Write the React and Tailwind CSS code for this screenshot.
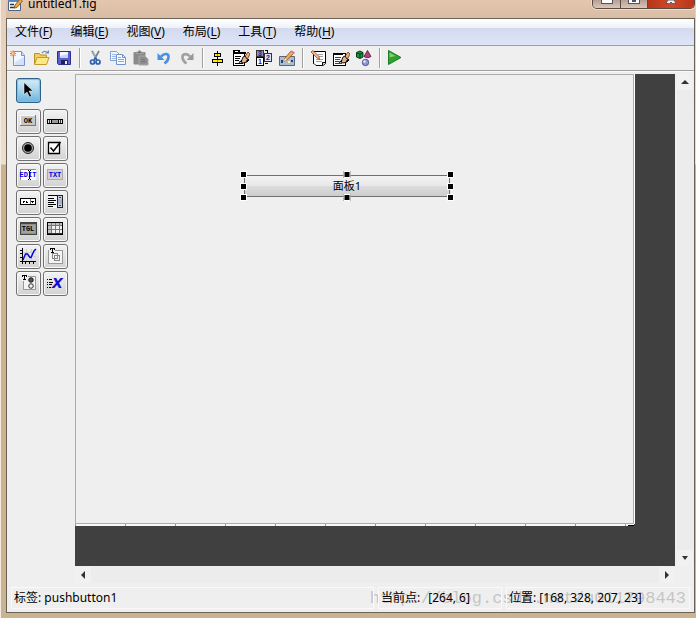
import clsx from 'clsx';

const menus = [
  { label: '文件', key: 'F' },
  { label: '编辑', key: 'E' },
  { label: '视图', key: 'V' },
  { label: '布局', key: 'L' },
  { label: '工具', key: 'T' },
  { label: '帮助', key: 'H' },
];

// Hand holding a pencil, shared by the two editor icons
const hand = (
  <>
    <path d="M8 13l3-4 4-6 2 2-3 6z" fill="#f6b26b" stroke="#3a2210" strokeWidth=".7" />
    <path d="M10 8l2-1 2 3 2 1-2 2-4 1-2-1z" fill="#e8b088" stroke="#000" strokeWidth=".9" />
    <path d="M6 13.500l3-2M13 12.500l3-2" stroke="#000" strokeWidth="1.200" />
  </>
);

// Toolbar icons, drawn on a 17x18 grid
const toolIcons = {
  new: (
    <>
      <path d="M3.500 2.500h8l3 4v10h-11z" fill="#f4f8ff" stroke="#7b8fd0" />
      <path d="M5 13l9-5v8H5z" fill="#d3e1fa" />
      <path d="M11.500 2.500v4h3" fill="#cfdcf6" stroke="#7b8fd0" />
      <path d="M.5 2l5 5M5.500 2l-5 5M3 1.500v6M0 4.500h6" stroke="#e4602c" strokeWidth=".9" />
      <circle cx="3" cy="4.500" r="1.300" fill="#ffd27a" />
    </>
  ),
  open: (
    <>
      <path d="M1.500 15V4.500h5l1 1.500h6V9" fill="#f3cf5b" stroke="#b8902c" />
      <path d="M1.500 15.500l2.500-7h12l-2.500 7z" fill="#fde886" stroke="#c49a2c" />
      <path d="M9 4c2-2.500 4-2 5 0" fill="none" stroke="#6f8fb8" strokeWidth="1.300" />
      <path d="M12 4.500h4V1z" fill="#6f8fb8" />
    </>
  ),
  save: (
    <>
      <path d="M1.500 2.500h13v13h-12l-1-1z" fill="#5a5fd0" stroke="#2d2f86" />
      <path d="M4 3h8v6H4z" fill="#f4f7ff" />
      <path d="M4 7l8-2v4H4z" fill="#c6d3f2" />
      <path d="M5 11h7v4H5z" fill="#1f2152" />
      <path d="M9 12h2v3H9z" fill="#e9ecff" />
    </>
  ),
  cut: (
    <>
      <path d="M5 2l4.500 8M12 2l-4.500 8" stroke="#6f8295" strokeWidth="1.700" />
      <path d="M5.500 3l3.500 6" stroke="#c3ced8" strokeWidth=".7" />
      <circle cx="5.500" cy="13" r="2" fill="none" stroke="#2b5fb4" strokeWidth="1.700" />
      <circle cx="11" cy="13" r="2" fill="none" stroke="#2b5fb4" strokeWidth="1.700" />
      <path d="M7 11l1.500-2L10 11" fill="none" stroke="#2b5fb4" strokeWidth="1.500" />
    </>
  ),
  copy: (
    <>
      <path d="M.5 2.500h6l3 3v6h-9z" fill="#eef5ff" stroke="#7ea1d6" />
      <path d="M2 5.500h4M2 7.500h5M2 9.500h4" stroke="#9bb9e4" />
      <path d="M6.500 5.500h6l3 3v7h-9z" fill="#f4f9ff" stroke="#6f95d0" />
      <path d="M12.500 5.500v3h3" fill="none" stroke="#6f95d0" />
      <path d="M8 8.500h3M8 10.500h6M8 12.500h6" stroke="#88abe0" />
    </>
  ),
  paste: (
    <>
      <rect x=".5" y="3" width="12" height="12.500" rx="1" fill="#8a8a8a" />
      <path d="M3 4.500V3h2c0-2 3-2 3 0h2v1.500z" fill="#777" stroke="#b5b5b5" strokeWidth=".6" />
      <path d="M6 7h6l3 3v6H6z" fill="#8f8f8f" stroke="#a9a9a9" />
      <path d="M8 10.500h4M8 12.500h5" stroke="#777" />
    </>
  ),
  undo: (
    <>
      <path d="M5 7.500c4-4 8-3 7.500 1-.3 3-2 4.500-4 6" fill="none" stroke="#4a8fe2" strokeWidth="2.600" />
      <path d="M1.500 4v7h7z" fill="#4a8fe2" />
    </>
  ),
  redo: (
    <>
      <path d="M11 7.500C7.500 3.500 3 5 3.500 8.500c.3 3 1.700 4.500 4 6" fill="none" stroke="#a0a0a0" strokeWidth="2.600" />
      <path d="M14.500 4v7h-7z" fill="#989898" />
    </>
  ),
  align: (
    <g shapeRendering="crispEdges">
      <path d="M7 2h1v15H7z" />
      <path d="M4.500 4.500h6v3h-6zM2.500 10.500h10v3h-10z" fill="#ffee00" stroke="#000" />
      <path d="M7 5h1v2H7zM7 11h1v2H7z" fill="#b09a00" />
    </g>
  ),
  menuEditor: (
    <>
      <g shapeRendering="crispEdges">
        <path d="M0 1h7v3H0zM0 3h13v2H0z" />
        <path d="M2 2h3v1H2z" fill="#fff" />
        <path d="M.5 4.500h11v12h-11z" fill="#fff" stroke="#000" />
        <path d="M2 7h6v1H2zM2 9h5v1H2zM2 11h4v1H2zM2 14h8v1H2z" />
      </g>
      {hand}
    </>
  ),
  tabOrder: (
    <>
      <g shapeRendering="crispEdges">
        <path d="M.5 1.500h7v6h-7z" fill="#8f90b4" stroke="#333" />
        <path d="M8.500 4.500h7v8h-7z" fill="#e0e0f4" stroke="#333" />
        <path d="M.5 8.500h7v8h-7z" fill="#fff" stroke="#000" />
        <path d="M9 1h3v1H9zM11 2h1v2h-1zM9 14h3v1H9z" />
      </g>
      <g className="font-['Liberation_Sans'] text-[7px] font-bold" fill="#15159a" textAnchor="middle">
        <text x="4" y="7">3</text>
        <text x="12" y="11">2</text>
        <text x="4" y="15">1</text>
      </g>
    </>
  ),
  toolbarEditor: (
    <>
      <path d="M.5 7.500h15v9H.5z" fill="#aebdcc" stroke="#54677d" />
      <path d="M2 11h2v3H2zM12 11h2v2h-2z" fill="#1f3f86" />
      <path d="M9 12h2v2H9z" fill="#fff2a0" />
      <path d="M5 12l1-3 6-7 3 2-7 7z" fill="#f0a860" stroke="#7b4316" strokeWidth=".7" />
      <path d="M12 3l1-1.500 3 2L15 5z" fill="#d6837b" />
      <path d="M5 12l1-3 2 2z" fill="#fff5da" />
    </>
  ),
  mfile: (
    <>
      <path d="M3.500 2.500h12v12l-2.500 2H6l-2-2h-.5z" fill="#fff" stroke="#000" />
      <path d="M8 5.500h5M9 7.500h4M6 10.500h7M6 12.500h6" stroke="#888" strokeWidth=".8" />
      <path d="M12.500 16.500v-3h3" fill="#d9d9d9" stroke="#000" />
      <path d="M1 3l2-1.500 6 6 .5 3L7 9z" fill="#f3b98a" stroke="#7a3a18" strokeWidth=".7" />
    </>
  ),
  property: (
    <>
      <g shapeRendering="crispEdges">
        <path d="M.5 4.500h12v12H.5z" fill="#fff" stroke="#000" />
        <path d="M0 4h10v2H0z" />
        <path d="M2 8h6v1H2zM2 10h5v1H2zM2 12h4v1H2zM2 14h7v1H2z" fill="#1d36d8" />
      </g>
      {hand}
    </>
  ),
  browser: (
    <>
      <path d="M.5 3.500L4 2l3 1.500V8L4 9.500.5 8z" fill="#21924a" stroke="#053b16" />
      <path d="M1 4l3 1 3-1M4 5v4" fill="none" stroke="#053b16" />
      <path d="M11.500 1.500l3.500 6c-2 1.500-5 1.500-7 0z" fill="#b5427d" stroke="#4a1030" strokeWidth=".8" />
      <circle cx="9.500" cy="13.500" r="3.200" fill="#8f98dc" stroke="#3b4080" strokeWidth=".8" />
      <circle cx="8.500" cy="12.500" r="1.200" fill="#e6eaff" />
    </>
  ),
  run: (
    <>
      <path d="M1.500 1.500v14l12.500-7z" fill="#2fa32f" stroke="#1d7d21" />
      <path d="M2.500 3.500v5l6-1.500z" fill="#7fd070" />
    </>
  ),
};

const toolGroups = [
  ['new', 'open', 'save'],
  ['cut', 'copy', 'paste', 'undo', 'redo'],
  ['align', 'menuEditor', 'tabOrder', 'toolbarEditor'],
  ['mfile', 'property', 'browser'],
  ['run'],
];

const glyph = "font-['Liberation_Mono'] text-[7px] font-bold";

// Component palette, each drawn on a 25x25 button
const palette = [
  {
    name: 'Push Button',
    icon: (
      <>
        <path d="M4 6h16v11H4z" fill="#777" />
        <path d="M4 6h15v10H4z" fill="#f8f8f8" />
        <path d="M5 7h14v9H5z" fill="#c9c9c9" />
        <text x="12" y="14" textAnchor="middle" className={glyph}>OK</text>
      </>
    ),
  },
  {
    name: 'Slider',
    icon: (
      <>
        <path d="M4 10h16v5H4z" />
        <path d="M5 11h3v3H5zM16 11h3v3h-3z" fill="#ddd" />
        <path d="M9 11h6v3H9z" fill="#999" />
        <path d="M6 11h1v3H6zM17 11h1v3h-1z" fill="#333" />
      </>
    ),
  },
  {
    name: 'Radio Button',
    icon: (
      <g shapeRendering="auto">
        <circle cx="12" cy="12" r="5.500" fill="#aaa" stroke="#222" />
        <circle cx="12" cy="12" r="3.800" />
      </g>
    ),
  },
  {
    name: 'Check Box',
    icon: (
      <g shapeRendering="auto">
        <path d="M5.500 6.500h11v11h-11z" fill="#fff" stroke="#000" strokeWidth="1.300" />
        <path d="M7.500 11.500l3 3.500 7-9" fill="none" stroke="#000" strokeWidth="1.500" />
      </g>
    ),
  },
  {
    name: 'Edit Text',
    icon: (
      <>
        <path d="M4 6h16v11H4z" fill="#8c8c8c" />
        <path d="M5 7h15v10H5z" fill="#fff" />
        <text x="12" y="14" textAnchor="middle" fill="#0000e0" className={glyph}>EDIT</text>
        <path d="M12 7h1v1h1V7h1v1h-1v8h1v1h-1v-1h-1v1h-1v-1h1V8h-1z" />
      </>
    ),
  },
  {
    name: 'Static Text',
    icon: (
      <>
        <path d="M4 6h16v11H4z" fill="#aaa" />
        <path d="M5 7h14v9H5z" fill="#d2d2d2" />
        <text x="12" y="14" textAnchor="middle" fill="#0000e0" className={glyph}>TXT</text>
      </>
    ),
  },
  {
    name: 'Pop-up Menu',
    icon: (
      <>
        <path d="M4.500 8.500h15v6h-15z" fill="#fff" stroke="#000" />
        <path d="M14 9h1v5h-1z" fill="#777" />
        <path d="M7 11h1v2H7zM8 11h1v1H8zM10 11h1v2h-1zM11 12h1v1h-1zM15 11h3v1h-3zM16 12h1v1h-1z" />
      </>
    ),
  },
  {
    name: 'Listbox',
    icon: (
      <>
        <path d="M5 6h14v12H5z" fill="#f4f4f4" />
        <path d="M5 5h15v1H5zM5 8h6v1H5zM5 10h8v1H5zM5 12h6v1H5zM5 14h8v1H5zM5 16h5v1H5z" />
        <path d="M14.500 5.500h5v12h-5z" fill="#aab4c8" stroke="#222" />
        <path d="M15 6h4v3h-4zM15 14h4v3h-4z" fill="#c5d0e6" />
        <path d="M16 7h2v1h-2zM16 15h2v1h-2z" fill="#1b2dc0" />
      </>
    ),
  },
  {
    name: 'Toggle Button',
    icon: (
      <>
        <path d="M4 5h17v13H4z" fill="#444" />
        <path d="M5 7h15v10H5z" fill="#8e8e8e" />
        <path d="M6 8h13v8H6z" fill="#a2a2a2" />
        <text x="12" y="14" textAnchor="middle" className={glyph}>TGL</text>
      </>
    ),
  },
  {
    name: 'Table',
    icon: (
      <>
        <path d="M4.500 5.500h15v12h-15z" fill="#f0f0f0" stroke="#000" />
        <path d="M5 6h14v2H5zM5 6h3v11H5z" fill="#c0c0c0" />
        <path d="M8 6h1v11H8zM12 6h1v11h-1zM16 6h1v11h-1zM5 8h14v1H5zM5 12h14v1H5z" fill="#777" />
        <path d="M5 16h14v1H5z" fill="#333" />
      </>
    ),
  },
  {
    name: 'Axes',
    icon: (
      <>
        <path d="M10 5h1v12h-1zM15 5h1v12h-1zM7 8h13v1H7zM7 12h13v1H7z" fill="#d0d0d0" />
        <path d="M6 4h1v16H6zM4 17h16v1H4zM4 6h2v1H4zM4 9h2v1H4zM4 13h2v1H4zM9 18h1v2H9zM13 18h1v2h-1zM17 18h1v2h-1z" />
        <path d="M7 16l2.500-6h2l2.500 3.500h1l3-6.500 2-2" fill="none" stroke="#0000d8" strokeWidth="1.400" shapeRendering="auto" />
      </>
    ),
  },
  {
    name: 'Panel',
    icon: (
      <>
        <path d="M5.500 6.500h14v13h-14z" fill="#f4f4f4" stroke="#999" />
        <path d="M9.500 9.500h5v5h-5zM11.500 11.500h5v5h-5z" fill="none" stroke="#888" />
        <path d="M6 4h6v5H6z" fill="#eee" />
        <path d="M7 4h5v2h-1V5h-1v3h1v1H8V8h1V5H8v1H7z" />
      </>
    ),
  },
  {
    name: 'Button Group',
    icon: (
      <>
        <path d="M7.500 5.500h12v13h-12z" fill="#f4f4f4" stroke="#999" />
        <path d="M5 4h7v6H5z" fill="#eee" />
        <path d="M6 4h5v2h-1V5H9v3h1v1H7V8h1V5H7v1H6z" />
        <g shapeRendering="auto">
          <circle cx="15" cy="9" r="2.300" fill="#555" stroke="#000" strokeWidth=".8" />
          <circle cx="15" cy="15" r="2.300" fill="#eee" stroke="#222" strokeWidth=".9" />
        </g>
      </>
    ),
  },
  {
    name: 'ActiveX Control',
    icon: (
      <>
        <path d="M4 8h1v1H4zM6 8h3v1H6zM4 11h1v1H4zM6 11h4v1H6zM4 13h1v1H4zM6 13h3v1H6zM4 16h1v1H4zM6 16h2v1H6z" />
        <text x="9" y="17" fill="#1010d0" className="font-['DejaVu_Sans'] text-[14px] font-bold italic">X</text>
      </>
    ),
  },
];

const handles = [
  '-left-1 -top-1',
  'left-1/2 -translate-x-1/2 -top-1',
  '-right-1 -top-1',
  '-left-1 top-2',
  '-right-1 top-2',
  '-left-1 -bottom-1',
  'left-1/2 -translate-x-1/2 -bottom-1',
  '-right-1 -bottom-1',
];

function TitleBar() {
  return (
    <header className="flex h-[18px] shrink-0 items-start justify-between overflow-hidden bg-linear-to-b from-[#e4c6af] to-[#d8bca4]">
      <div className="-mt-1 flex items-center gap-[5px]">
        <svg width="17" height="16" viewBox="0 0 17 16">
          <path d="M2.500 1.500h12v13h-12z" fill="#f8fbff" stroke="#4c6384" />
          <path d="M2 3h12v3H2z" fill="#5b83bd" />
          <path d="M4 8.500h4M4 11.500h5" stroke="#333" strokeWidth="1.500" />
          <path d="M8 12l1-3 5-6 2.500 2-5.500 6.500z" fill="#e9a63d" stroke="#7b4d1e" strokeWidth=".8" />
        </svg>
        <h1 className="leading-4">untitled1.fig</h1>
      </div>
      <div className="flex h-[9px] overflow-hidden rounded-b-[5px] border border-t-0 border-[#5a4a42] shadow-[0_0_0_1px_#efdccb]">
        <button aria-label="Minimize" className="flex w-7 justify-center border-r border-[#5a4a42] bg-linear-to-b from-[#b59f90] to-[#d9c7b9]">
          <span className="h-1 w-3 border border-t-0 border-[#55506a] bg-white" />
        </button>
        <button aria-label="Maximize" className="flex w-[27px] justify-center border-r border-[#5a4a42] bg-linear-to-b from-[#b59f90] to-[#d9c7b9]">
          <span className="flex h-1 w-3 justify-center border border-t-0 border-[#55506a] bg-white">
            <span className="h-0.5 w-1 bg-[#55506a]" />
          </span>
        </button>
        <button aria-label="Close" className="flex w-[46px] justify-center bg-linear-to-r from-[#b83418] via-[#d2492a] to-[#b83418]">
          <svg width="12" height="4" viewBox="0 0 12 4">
            <path d="M3 0h6l2 3.500H7.500L6 2 4.500 3.500H1z" fill="#f3f3f3" stroke="#4f4560" strokeWidth=".8" />
          </svg>
        </button>
      </div>
    </header>
  );
}

function MenuBar() {
  return (
    <nav className="flex h-[27px] shrink-0 items-center gap-[18px] border-b border-[#a0a0a0] bg-[linear-gradient(#ffffff,#eef1f8_34%,#d3daed_35%,#dfe5f8)] px-2">
      {menus.map(menu => (
        <button key={menu.key} className="leading-4">
          {menu.label}(<u className="underline-offset-2">{menu.key}</u>)
        </button>
      ))}
    </nav>
  );
}

function Toolbar() {
  return (
    <div className="flex h-[25px] shrink-0 items-center border-b border-[#a0a0a0]">
      {toolGroups.map((group, i) => (
        <div key={group[0]} className="flex items-center">
          {i > 0 && <span className="mx-[3px] h-5 w-0.5 border-l border-[#a0a0a0] bg-white" />}
          {group.map(name => (
            <button key={name} aria-label={name} className="flex w-[23px] justify-center">
              <svg width="17" height="18" viewBox="0 0 17 18">{toolIcons[name]}</svg>
            </button>
          ))}
        </div>
      ))}
    </div>
  );
}

function PaletteButton({ name, selected, children }) {
  return (
    <button
      aria-label={name}
      className={clsx(
        'size-[25px] rounded-[3px] border',
        selected
          ? 'border-[#2c628b] bg-linear-to-b from-[#d5ecf8] via-[#a5d4ee] to-[#6bb3dc] shadow-[inset_0_0_1px_1px_#8fb8d0]'
          : 'border-[#707070] bg-linear-to-b from-[#f3f3f3] to-[#d2d2d2] shadow-[inset_0_0_0_1px_#f8f8f8]'
      )}
    >
      <svg width="23" height="23" viewBox="1 1 23 23" shapeRendering="crispEdges">{children}</svg>
    </button>
  );
}

function Palette() {
  return (
    <aside className="flex w-[68px] shrink-0 flex-col gap-1.5 pt-1 pl-[9px]">
      <PaletteButton name="Select" selected>
        <path d="M8 4.500v12l3-2.500 2.500 5 2-1-2.500-5h4z" stroke="#fff" strokeWidth=".5" shapeRendering="auto" />
      </PaletteButton>
      <div className="grid grid-cols-[25px_25px] gap-0.5">
        {palette.map(item => (
          <PaletteButton key={item.name} name={item.name}>{item.icon}</PaletteButton>
        ))}
      </div>
    </aside>
  );
}

function Arrow({ d, label }) {
  return (
    <button aria-label={label} className="flex size-4 items-center justify-center bg-[#f1f1f1]">
      <svg width="8" height="8" viewBox="0 0 8 8"><path d={d} fill="#333" /></svg>
    </button>
  );
}

function Canvas() {
  return (
    <div className="flex min-w-0 flex-1 flex-col bg-[#404040] pr-[41px] pb-10">
      <div className="relative flex-1 border border-[#acacac] bg-[#efefef] shadow-[1px_0_0_#fff]">
        {/* Selected push button with its resize handles */}
        <div className="absolute top-[100px] left-[168px] h-[22px] w-[206px]">
          <button className="flex h-full w-full items-center justify-center border border-[#707070] bg-[linear-gradient(#f2f2f2,#e8e8e8_50%,#dcdcdc_50%,#cdcdcd)] text-[11px] leading-4">
            面板1
          </button>
          {handles.map(pos => (
            <span key={pos} className={clsx('absolute size-[7px] border border-white bg-black', pos)} />
          ))}
        </div>
      </div>
      <div className="flex h-0.5 justify-end bg-[repeating-linear-gradient(90deg,#999_0_1px,#f8f8f8_1px_50px)]">
        <span className="mt-px w-1.5 bg-black" />
      </div>
    </div>
  );
}

function Workspace() {
  return (
    <main className="flex min-h-0 flex-1 border-t border-[#fafafa] pt-0.5">
      <Palette />
      <div className="flex min-w-0 flex-1 flex-col">
        <div className="flex min-h-0 flex-1">
          <Canvas />
          <div className="ml-0.5 flex w-[17px] flex-col justify-between bg-[#ececec]">
            <Arrow label="Scroll up" d="M0 6l4-4 4 4z" />
            <Arrow label="Scroll down" d="M1 2h6L4 6z" />
          </div>
        </div>
        <div className="mt-px mr-[19px] flex h-4 justify-between bg-[#ececec]">
          <Arrow label="Scroll left" d="M6 0v8L2 4z" />
          <Arrow label="Scroll right" d="M2 0v8l4-4z" />
        </div>
      </div>
    </main>
  );
}

function StatusBar() {
  return (
    <footer className="relative mx-1 mt-1 mb-[3px] flex h-[22px] shrink-0 gap-1 leading-4">
      <span className="pointer-events-none absolute right-1 bottom-0 font-['Liberation_Mono',monospace] text-[17px] leading-5 text-[#999]/50">
        http://blog.csdn.net/u011798443
      </span>
      <div className="relative flex flex-1 items-center border border-[#fafafa] px-0.5">标签: pushbutton1</div>
      <div className="relative flex w-[124px] items-center gap-2 border border-[#fafafa] px-0.5">
        <span>当前点:</span>
        <span>[264, 6]</span>
      </div>
      <div className="relative flex w-[184px] items-center border border-[#fafafa] px-0.5">位置: [168, 328, 207, 23]</div>
    </footer>
  );
}

export default function App() {
  return (
    <div className="flex h-screen flex-col border-l border-[#f4ece0] bg-[linear-gradient(#e6cdb8,#eae0d0_164px,#c9b48f_165px)] pr-px pb-[5px] pl-[5px] font-['Noto_Sans','Noto_Sans_CJK_SC',sans-serif] text-[12px] text-black">
      <TitleBar />
      <div className="flex min-h-0 flex-1 flex-col border border-[#6b6154] bg-[#efefef]">
        <MenuBar />
        <Toolbar />
        <Workspace />
        <StatusBar />
      </div>
    </div>
  );
}
